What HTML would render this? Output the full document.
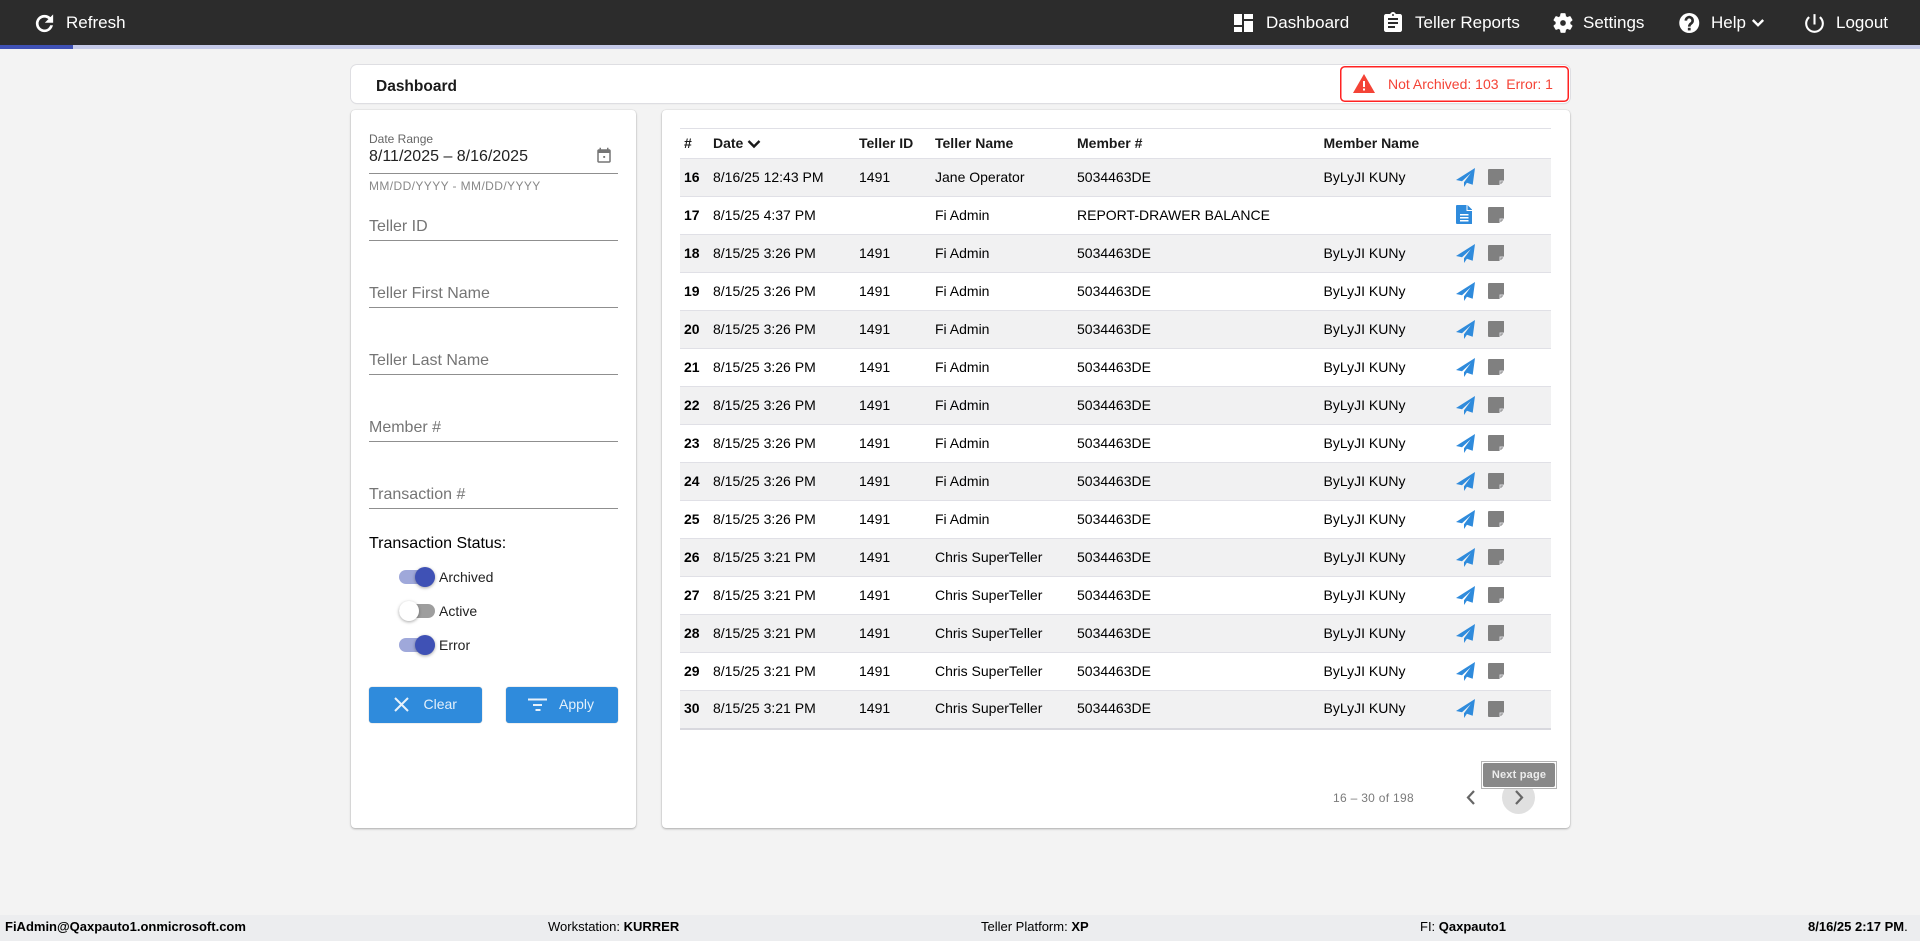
<!DOCTYPE html>
<html><head><meta charset="utf-8"><title>Dashboard</title>
<style>
*{box-sizing:border-box}
html,body{margin:0;padding:0;width:1920px;height:941px;overflow:hidden;background:#f3f3f3;font-family:"Liberation Sans",Arial,sans-serif;color:#000}
.a{position:absolute}
.t{position:absolute;white-space:nowrap;line-height:20px}
.nav{color:#fff;font-size:17px;top:13px}
svg{position:absolute;display:block}
.card{position:absolute;background:#fff;border-radius:4px;box-shadow:0 1px 2px rgba(0,0,0,.28),0 0 1px rgba(0,0,0,.18)}
.ln{position:absolute;left:369px;width:249px;height:1px;background:#8f8f8f}
.ph{font-size:16px;color:#757575;left:369px}
.trk{position:absolute;left:399px;width:36px;height:14px;border-radius:7px}
.th{position:absolute;width:20px;height:20px;border-radius:50%;box-shadow:0 1px 3px rgba(0,0,0,.35)}
.sw{font-size:14px;color:#222;left:439px}
.btn{position:absolute;background:#2f8bdc;border-radius:3px;top:687px;height:36px;box-shadow:0 0 1px rgba(0,0,0,.4)}
table{position:absolute;left:680px;top:128px;width:871px;table-layout:fixed;border-collapse:collapse;font-size:14px;border-top:1px solid #e0e0e6}
th{height:30px;padding:0 0 1px 4px;text-align:left;font-size:14px;font-weight:bold;color:#1a1a1a;border-bottom:1px solid #e0e0e6}
td{height:38px;padding:0 0 2px 4px;white-space:nowrap;border-bottom:1px solid #e0e0e6;position:relative}
tr.o td{background:#f1f1f2}
td:first-child{font-weight:bold}
tbody tr:last-child td{border-bottom:2px solid #d8d8de}
.ic{position:relative;display:inline-block;width:60px;height:20px;vertical-align:middle}
.foot{font-size:13px;top:917px}
.s{left:0;top:1px}
.n{left:32px;top:2.500px}
.d{left:0;top:.5px}
</style></head><body>
<svg width="0" height="0" style="position:absolute"><defs>
<symbol id="send" viewBox="0 0 19 19"><path fill="#2f8bdc" d="M19 0L0 12l6 1.300L14.700 5.300 8 14.300 8 19l2.900-4.300L16.700 16.700z"/></symbol>
<symbol id="note" viewBox="0 0 16.500 16"><path fill="#808080" d="M1 0h14.500a1 1 0 0 1 1 1v10.500h-5v4.500H1a1 1 0 0 1-1-1V1a1 1 0 0 1 1-1z"/><path fill="#dcdce0" d="M11.500 11.500h5L11.500 16z"/><path fill="#8d8d8d" d="M12.500 15v-2.500h2.500v1h-1.500v1.500z"/></symbol>
<symbol id="doc" viewBox="0 0 16.500 19"><path fill="#2f8bdc" d="M1 0h9.500v6h6v12a1 1 0 0 1-1 1H1a1 1 0 0 1-1-1V1a1 1 0 0 1 1-1zM11.500 0l5 5h-5z"/><path fill="#fff" d="M4 9h8.500v1.500H4zM4 12h8.500v1.500H4zM4 15h8.500v1.500H4z"/></symbol>
</defs></svg>

<div class="a" style="left:0;top:0;width:1920px;height:45px;background:#2c2c2c"></div>
<div class="a" style="left:0;top:45px;width:1920px;height:4px;background:#c5cae9"></div>
<div class="a" style="left:0;top:45px;width:73px;height:4px;background:#3f51b5"></div>

<svg style="left:32px;top:11px" width="25" height="25" viewBox="0 0 24 24"><path fill="#fff" stroke="#fff" stroke-width=".6" d="M17.650 6.350C16.200 4.900 14.210 4 12 4c-4.420 0-7.990 3.580-7.990 8s3.570 8 7.990 8c3.730 0 6.840-2.550 7.730-6h-2.080c-.82 2.330-3.040 4-5.650 4-3.310 0-6-2.690-6-6s2.690-6 6-6c1.660 0 3.140.69 4.220 1.780L13 11h7V4l-2.350 2.350z"/></svg>
<div class="t nav" style="left:66px">Refresh</div>

<svg style="left:1234px;top:14px" width="19" height="18" viewBox="0 0 19 18"><path fill="#fff" d="M0 0h8v11H0zM0 13h8v5H0zM10 0h9v5h-9zM10 7h9v11h-9z"/></svg>
<div class="t nav" style="left:1266px">Dashboard</div>
<svg style="left:1380.500px;top:11px" width="24" height="24" viewBox="0 0 24 24"><path fill="#fff" d="M19 3h-4.180C14.400 1.840 13.300 1 12 1c-1.300 0-2.400.84-2.820 2H5c-1.100 0-2 .9-2 2v14c0 1.100.9 2 2 2h14c1.100 0 2-.9 2-2V5c0-1.100-.9-2-2-2zm-7 0c.55 0 1 .45 1 1s-.45 1-1 1-1-.45-1-1 .45-1 1-1zm2 14H7v-2h7v2zm3-4H7v-2h10v2zm0-4H7V7h10v2z"/></svg>
<div class="t nav" style="left:1415px">Teller Reports</div>
<svg style="left:1551px;top:11px" width="24" height="24" viewBox="0 0 24 24"><path fill="#fff" stroke="#fff" stroke-width=".4" d="M19.140 12.940c.04-.3.06-.61.06-.94 0-.32-.02-.64-.07-.94l2.030-1.580c.18-.14.23-.41.12-.61l-1.920-3.320c-.12-.22-.37-.29-.59-.22l-2.390.96c-.5-.38-1.030-.7-1.620-.94l-.36-2.540c-.04-.24-.24-.41-.48-.41h-3.840c-.24 0-.43.17-.47.41l-.36 2.540c-.59.24-1.130.57-1.620.94l-2.390-.96c-.22-.08-.47 0-.59.22L2.740 8.870c-.12.21-.08.47.12.61l2.030 1.580c-.05.3-.09.63-.09.94s.02.64.07.94l-2.030 1.580c-.18.14-.23.41-.12.61l1.920 3.320c.12.22.37.29.59.22l2.390-.96c.5.38 1.030.7 1.620.94l.36 2.540c.05.24.24.41.48.41h3.840c.24 0 .44-.17.47-.41l.36-2.540c.59-.24 1.130-.56 1.620-.94l2.390.96c.22.08.47 0 .59-.22l1.920-3.320c.12-.22.07-.47-.12-.61l-2.010-1.580zM12 15c-1.650 0-3-1.350-3-3s1.350-3 3-3 3 1.350 3 3-1.350 3-3 3z"/></svg>
<div class="t nav" style="left:1583px">Settings</div>
<svg style="left:1679px;top:13px" width="20.500" height="20" viewBox="0 0 20 20"><circle cx="10" cy="10" r="10" fill="#fff"/><path fill="none" stroke="#2c2c2c" stroke-width="2.600" d="M6.600 7.600a3.400 3.400 0 1 1 5.400 2.700c-1.300.9-2 1.700-2 3.300"/><path fill="#2c2c2c" d="M8.600 14.800h2.800v2.600H8.600z"/></svg>
<div class="t nav" style="left:1711px">Help</div>
<svg style="left:1751px;top:17px" width="14" height="12" viewBox="0 0 14 12"><path fill="none" stroke="#fff" stroke-width="2.400" d="M1.800 3l5.200 5.200L12.200 3"/></svg>
<svg style="left:1802px;top:11px" width="25" height="25" viewBox="0 0 24 24"><path fill="#fff" d="M13 3h-2v10h2V3zm4.830 2.170l-1.420 1.420C17.990 7.860 19 9.810 19 12c0 3.870-3.130 7-7 7s-7-3.130-7-7c0-2.190 1.010-4.140 2.580-5.420L6.170 5.170C4.230 6.820 3 9.260 3 12c0 4.970 4.030 9 9 9s9-4.030 9-9c0-2.740-1.230-5.180-3.170-6.830z"/></svg>
<div class="t nav" style="left:1836px">Logout</div>

<div class="card" style="left:351px;top:65px;width:1219px;height:38px;border-radius:6px;box-shadow:0 0 0 1px #dedee2,0 1px 1px rgba(0,0,0,.12)"></div>
<div class="t" style="left:376px;top:76.500px;font-size:15.500px;font-weight:bold;color:#1a1a1a">Dashboard</div>
<svg style="left:1340px;top:66px" width="229" height="36"><rect x=".75" y=".75" width="227.500" height="34.500" rx="4" fill="#fff" stroke="#f22" stroke-width="1.500"/></svg>
<svg style="left:1353px;top:74px" width="22" height="19" viewBox="0 0 22 19"><path fill="#f44336" d="M11 0L22 19H0z"/><path fill="#fff" d="M10 7h2v6h-2zM10 14.500h2v2h-2z"/></svg>
<div class="t" style="left:1388px;top:74px;font-size:14px;color:#f44336;white-space:pre">Not Archived: 103  Error: 1</div>

<div class="card" style="left:351px;top:110px;width:285px;height:718px"></div>
<div class="t" style="left:369px;top:129px;font-size:12px;color:#666">Date Range</div>
<div class="t" style="left:369px;top:147px;font-size:16px;color:#222">8/11/2025 – 8/16/2025</div>
<svg style="left:595px;top:147px" width="18" height="18" viewBox="0 0 24 24"><path fill="#757575" d="M11 12h2.500v2.500H11zM16 1v2H8V1H6v2H5c-1.110 0-1.990.9-1.990 2L3 19c0 1.100.89 2 2 2h14c1.100 0 2-.9 2-2V5c0-1.100-.9-2-2-2h-1V1h-2zm3 18H5V8h14v11z"/></svg>
<div class="ln" style="top:173px"></div>
<div class="t" style="left:369px;top:176px;font-size:12px;color:#888;letter-spacing:.4px">MM/DD/YYYY - MM/DD/YYYY</div>

<div class="t ph" style="top:217px">Teller ID</div><div class="ln" style="top:240px"></div>
<div class="t ph" style="top:284px">Teller First Name</div><div class="ln" style="top:307px"></div>
<div class="t ph" style="top:351px">Teller Last Name</div><div class="ln" style="top:374px"></div>
<div class="t ph" style="top:418px">Member #</div><div class="ln" style="top:441px"></div>
<div class="t ph" style="top:485px">Transaction #</div><div class="ln" style="top:508px"></div>

<div class="t" style="left:369px;top:534px;font-size:16px">Transaction Status:</div>
<div class="trk" style="top:570px;background:#9fa8da"></div><div class="th" style="left:415px;top:567px;background:#3f51b5"></div>
<div class="t sw" style="top:566.500px">Archived</div>
<div class="trk" style="top:604px;background:#9e9e9e"></div><div class="th" style="left:399px;top:601px;background:#fff"></div>
<div class="t sw" style="top:600.500px">Active</div>
<div class="trk" style="top:638px;background:#9fa8da"></div><div class="th" style="left:415px;top:635px;background:#3f51b5"></div>
<div class="t sw" style="top:634.500px">Error</div>

<div class="btn" style="left:369px;width:113px"></div>
<svg style="left:394px;top:697px" width="15" height="15" viewBox="0 0 15 15"><path stroke="#e8f2fb" stroke-width="2" d="M1 1l13 13M14 1L1 14"/></svg>
<div class="t" style="left:423.500px;top:693.500px;font-size:14px;color:#e3f0fb">Clear</div>
<div class="btn" style="left:506px;width:112px"></div>
<svg style="left:528px;top:698px" width="19" height="13" viewBox="0 0 19 13"><path stroke="#e8f2fb" stroke-width="2" d="M0 1.500h19M5 7h9M7.500 12h5"/></svg>
<div class="t" style="left:559px;top:693.500px;font-size:14px;color:#e3f0fb">Apply</div>

<div class="card" style="left:662px;top:110px;width:908px;height:718px"></div>
<table>
<colgroup><col style="width:29px"><col style="width:146px"><col style="width:76px"><col style="width:142px"><col style="width:246.500px"><col style="width:132px"><col></colgroup>
<thead><tr><th>#</th><th>Date <svg style="position:static;display:inline-block;vertical-align:-1px" width="14" height="10" viewBox="0 0 14 10"><path fill="none" stroke="#1a1a1a" stroke-width="2.400" d="M1.500 2l5.500 5.500L12.500 2"/></svg></th><th>Teller ID</th><th>Teller Name</th><th>Member #</th><th>Member Name</th><th></th></tr></thead>
<tbody>
<tr class="o"><td>16</td><td>8/16/25 12:43 PM</td><td>1491</td><td>Jane Operator</td><td>5034463DE</td><td>ByLyJI KUNy</td><td><span class="ic"><svg class="s" width="19" height="19"><use href="#send"/></svg><svg class="n" width="16.500" height="16"><use href="#note"/></svg></span></td></tr>
<tr><td>17</td><td>8/15/25 4:37 PM</td><td></td><td>Fi Admin</td><td colspan="2">REPORT-DRAWER BALANCE</td><td><span class="ic"><svg class="d" width="16.500" height="19"><use href="#doc"/></svg><svg class="n" width="16.500" height="16"><use href="#note"/></svg></span></td></tr>
<tr class="o"><td>18</td><td>8/15/25 3:26 PM</td><td>1491</td><td>Fi Admin</td><td>5034463DE</td><td>ByLyJI KUNy</td><td><span class="ic"><svg class="s" width="19" height="19"><use href="#send"/></svg><svg class="n" width="16.500" height="16"><use href="#note"/></svg></span></td></tr>
<tr><td>19</td><td>8/15/25 3:26 PM</td><td>1491</td><td>Fi Admin</td><td>5034463DE</td><td>ByLyJI KUNy</td><td><span class="ic"><svg class="s" width="19" height="19"><use href="#send"/></svg><svg class="n" width="16.500" height="16"><use href="#note"/></svg></span></td></tr>
<tr class="o"><td>20</td><td>8/15/25 3:26 PM</td><td>1491</td><td>Fi Admin</td><td>5034463DE</td><td>ByLyJI KUNy</td><td><span class="ic"><svg class="s" width="19" height="19"><use href="#send"/></svg><svg class="n" width="16.500" height="16"><use href="#note"/></svg></span></td></tr>
<tr><td>21</td><td>8/15/25 3:26 PM</td><td>1491</td><td>Fi Admin</td><td>5034463DE</td><td>ByLyJI KUNy</td><td><span class="ic"><svg class="s" width="19" height="19"><use href="#send"/></svg><svg class="n" width="16.500" height="16"><use href="#note"/></svg></span></td></tr>
<tr class="o"><td>22</td><td>8/15/25 3:26 PM</td><td>1491</td><td>Fi Admin</td><td>5034463DE</td><td>ByLyJI KUNy</td><td><span class="ic"><svg class="s" width="19" height="19"><use href="#send"/></svg><svg class="n" width="16.500" height="16"><use href="#note"/></svg></span></td></tr>
<tr><td>23</td><td>8/15/25 3:26 PM</td><td>1491</td><td>Fi Admin</td><td>5034463DE</td><td>ByLyJI KUNy</td><td><span class="ic"><svg class="s" width="19" height="19"><use href="#send"/></svg><svg class="n" width="16.500" height="16"><use href="#note"/></svg></span></td></tr>
<tr class="o"><td>24</td><td>8/15/25 3:26 PM</td><td>1491</td><td>Fi Admin</td><td>5034463DE</td><td>ByLyJI KUNy</td><td><span class="ic"><svg class="s" width="19" height="19"><use href="#send"/></svg><svg class="n" width="16.500" height="16"><use href="#note"/></svg></span></td></tr>
<tr><td>25</td><td>8/15/25 3:26 PM</td><td>1491</td><td>Fi Admin</td><td>5034463DE</td><td>ByLyJI KUNy</td><td><span class="ic"><svg class="s" width="19" height="19"><use href="#send"/></svg><svg class="n" width="16.500" height="16"><use href="#note"/></svg></span></td></tr>
<tr class="o"><td>26</td><td>8/15/25 3:21 PM</td><td>1491</td><td>Chris SuperTeller</td><td>5034463DE</td><td>ByLyJI KUNy</td><td><span class="ic"><svg class="s" width="19" height="19"><use href="#send"/></svg><svg class="n" width="16.500" height="16"><use href="#note"/></svg></span></td></tr>
<tr><td>27</td><td>8/15/25 3:21 PM</td><td>1491</td><td>Chris SuperTeller</td><td>5034463DE</td><td>ByLyJI KUNy</td><td><span class="ic"><svg class="s" width="19" height="19"><use href="#send"/></svg><svg class="n" width="16.500" height="16"><use href="#note"/></svg></span></td></tr>
<tr class="o"><td>28</td><td>8/15/25 3:21 PM</td><td>1491</td><td>Chris SuperTeller</td><td>5034463DE</td><td>ByLyJI KUNy</td><td><span class="ic"><svg class="s" width="19" height="19"><use href="#send"/></svg><svg class="n" width="16.500" height="16"><use href="#note"/></svg></span></td></tr>
<tr><td>29</td><td>8/15/25 3:21 PM</td><td>1491</td><td>Chris SuperTeller</td><td>5034463DE</td><td>ByLyJI KUNy</td><td><span class="ic"><svg class="s" width="19" height="19"><use href="#send"/></svg><svg class="n" width="16.500" height="16"><use href="#note"/></svg></span></td></tr>
<tr class="o"><td>30</td><td>8/15/25 3:21 PM</td><td>1491</td><td>Chris SuperTeller</td><td>5034463DE</td><td>ByLyJI KUNy</td><td><span class="ic"><svg class="s" width="19" height="19"><use href="#send"/></svg><svg class="n" width="16.500" height="16"><use href="#note"/></svg></span></td></tr>
</tbody></table>

<div class="t" style="left:1333px;top:788px;font-size:12px;color:#7b7b7b;letter-spacing:.3px">16 – 30 of 198</div>
<svg style="left:1465px;top:788px" width="12" height="20" viewBox="0 0 12 20"><path fill="none" stroke="#666" stroke-width="2.200" d="M9 3L3 9.500 9 16"/></svg>
<div class="a" style="left:1502px;top:781px;width:33px;height:33px;border-radius:50%;background:#e0e0e0"></div>
<svg style="left:1513px;top:788px" width="12" height="20" viewBox="0 0 12 20"><path fill="none" stroke="#666" stroke-width="2.200" d="M3 3l6 6.500L3 16"/></svg>
<div class="a" style="left:1481px;top:761px;width:76px;height:28px;border:1px solid #b4b4b4;background:#fff;padding:1px"><div style="width:100%;height:100%;background:rgba(128,128,128,.93);border-radius:2px;color:#ececec;font-size:11px;font-weight:bold;line-height:24px;text-align:center;letter-spacing:.2px">Next page</div></div>

<div class="a" style="left:0;top:915px;width:1920px;height:26px;background:#ecedef"></div>
<div class="t foot" style="left:5px;font-weight:bold">FiAdmin@Qaxpauto1.onmicrosoft.com</div>
<div class="t foot" style="left:548px">Workstation: <b>KURRER</b></div>
<div class="t foot" style="left:981px">Teller Platform: <b>XP</b></div>
<div class="t foot" style="left:1420px">FI: <b>Qaxpauto1</b></div>
<div class="t foot" style="left:1808px"><b>8/16/25 2:17 PM</b>.</div>
</body></html>
